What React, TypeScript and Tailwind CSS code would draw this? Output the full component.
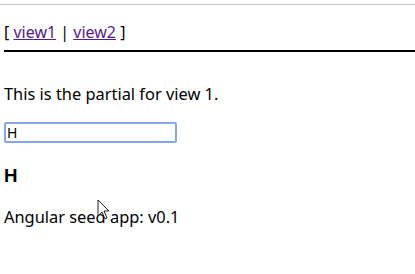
export default function App() {
  return (
    <div
      className="relative w-[415px] h-[274px] bg-white overflow-hidden text-black"
      style={{ fontFamily: '"Noto Sans", "Open Sans", sans-serif' }}
    >
      <div className="mt-[4px] h-px bg-[#c3c3c3]" />
      <div className="ml-[4px]">
        <div className="mt-[17px] pb-[8px] border-b-2 border-black text-[16px] leading-[20px]">
          [ <a className="text-[#551a8b] underline">view1</a> | <a className="text-[#551a8b] underline">view2</a> ]
        </div>
        <p className="mt-[32px] text-[16.4px] leading-[20px]">This is the partial for view 1.</p>
        <div className="mt-[18px] w-[173px] h-[21px] border-2 border-[#86a6ea] rounded-[2px] flex items-center px-[1px] text-[14px] leading-[16px]">
          H
        </div>
        <h3 className="mt-[22px] text-[18.72px] font-bold leading-[22px]" style={{ fontFamily: '"Liberation Sans", Arial, sans-serif' }}>H</h3>
        <p className="mt-[20px] text-[16.4px] leading-[20px]">Angular seed app: v0.1</p>
      </div>
      <svg className="absolute left-[97px] top-[199px]" width="14" height="21" viewBox="0 0 14 21">
        <path d="M1 1 L1 17 L5 13 L8 20 L10 19 L7 12 L12 12 Z" fill="#fff" stroke="#222" strokeWidth="1" strokeLinejoin="round" />
      </svg>
    </div>
  );
}
